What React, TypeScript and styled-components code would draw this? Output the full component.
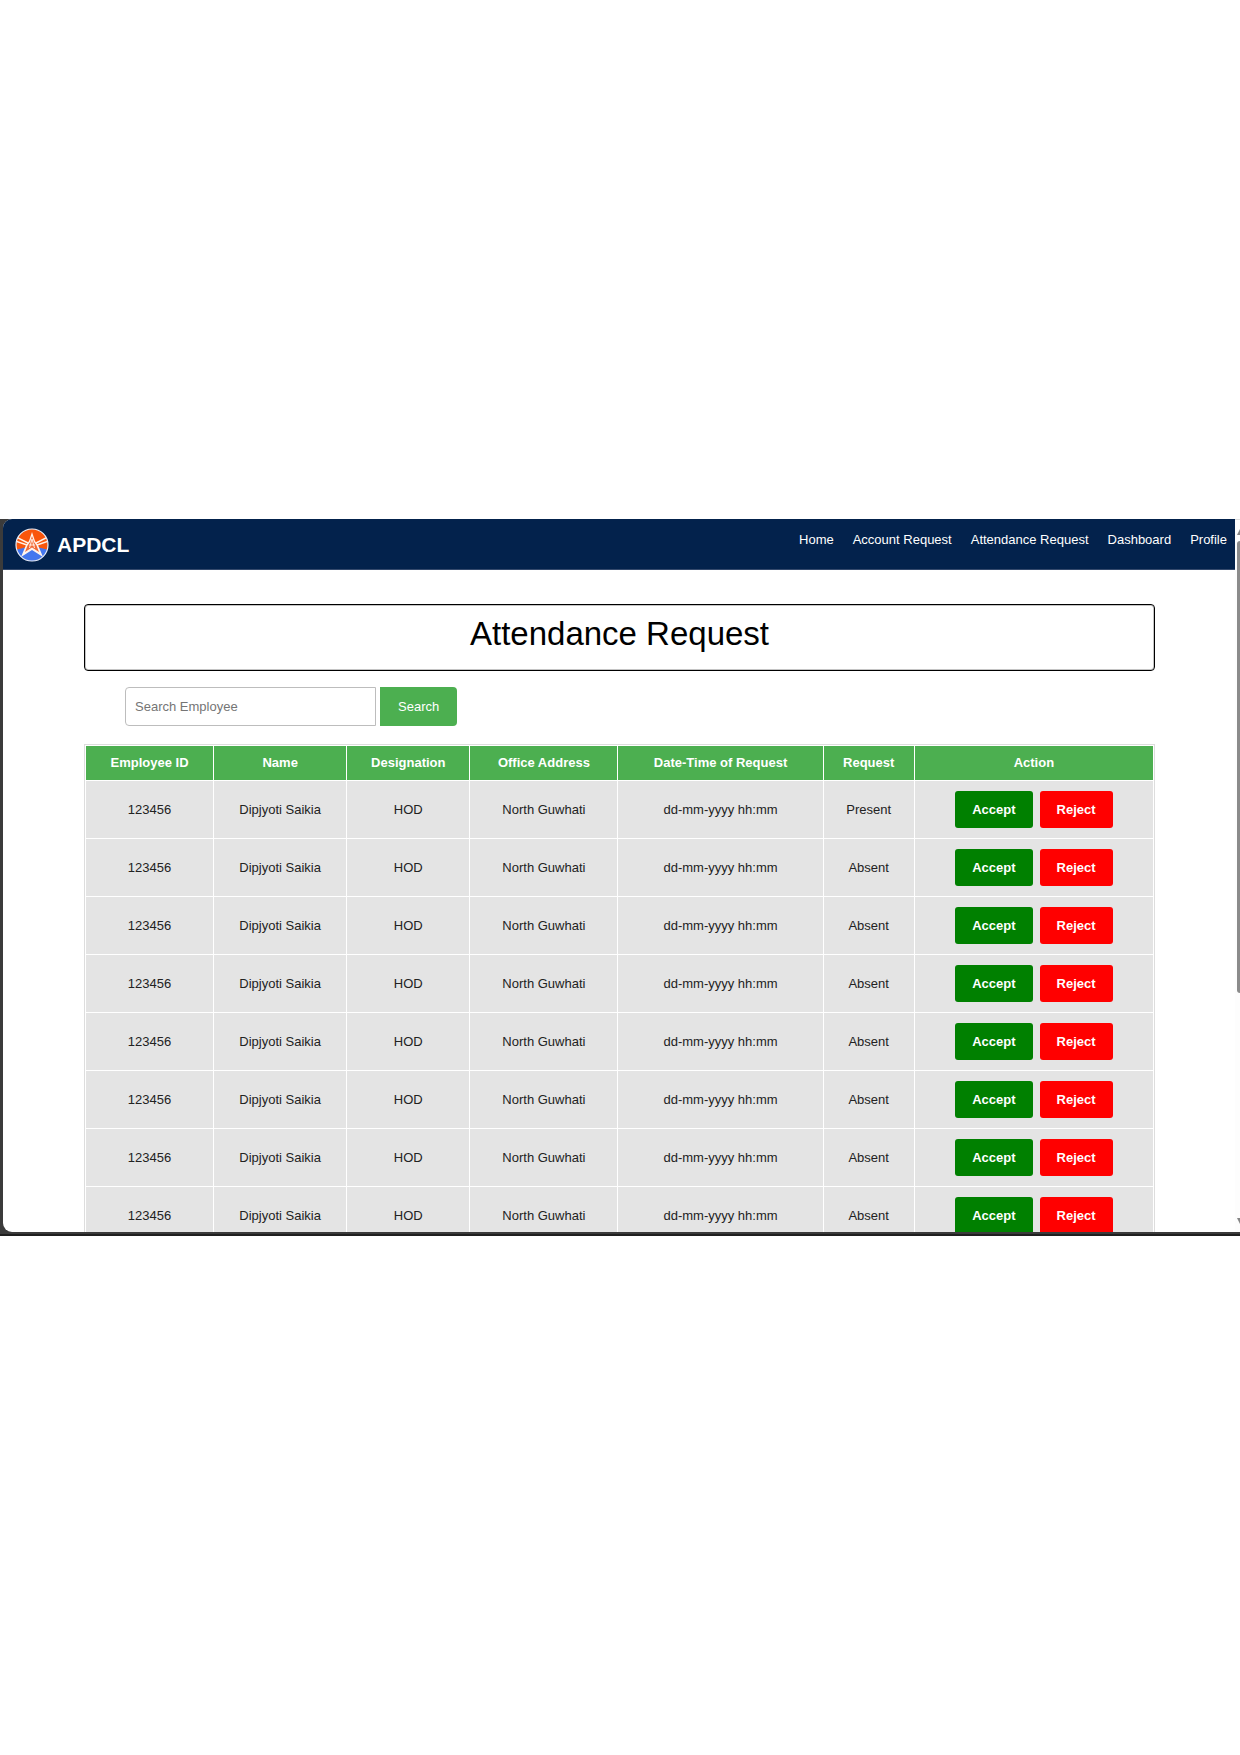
import React from "react";
import styled, { createGlobalStyle } from "styled-components";

const GlobalStyle = createGlobalStyle`
  *, *::before, *::after { box-sizing: border-box; }
  body {
    margin: 0;
    background: #ffffff;
    color: #222222;
    font: 13px/16px "Liberation Sans", Arial, sans-serif;
  }
`;

const Page = styled.div`
  min-height: 100vh;
  display: flex;
  flex-direction: column;
  justify-content: center;
`;

const Frame = styled.div`
  aspect-ratio: 1240 / 717;
  display: flex;
  padding: 0 0 2px 3px;
  background: #3b3b3b;
  border-bottom: 2px solid #1f1f1f;
  overflow: hidden;
`;

const Viewport = styled.div`
  flex: 1;
  min-width: 0;
  display: flex;
  background: #ffffff;
  border-radius: 9px 0 0 9px;
  overflow: hidden;
`;

const Content = styled.div`
  flex: 1;
  min-width: 0;
`;

const Header = styled.header`
  display: flex;
  justify-content: space-between;
  align-items: flex-start;
  padding: 9px 8px 7px 12px;
  background: #03224c;
  border-bottom: 1px solid #34496c;
`;

const Brand = styled.a`
  display: flex;
  align-items: center;
  gap: 8px;
  color: #ffffff;
  font-size: 21px;
  line-height: 24px;
  font-weight: bold;
  text-decoration: none;
`;

const NavLinks = styled.nav`
  display: flex;
  gap: 19px;
  padding-top: 4px;
`;

const NavLink = styled.a`
  color: #ffffff;
  text-decoration: none;
`;

const Main = styled.main`
  padding: 34px 80px 0 81px;
`;

const Title = styled.h1`
  margin: 0;
  padding: 9px 0 16px;
  border: 1px solid #000000;
  border-radius: 4px;
  box-shadow: inset 0 0 0 1px #c4c4c4;
  color: #000000;
  font-size: 33px;
  line-height: 40px;
  font-weight: normal;
  text-align: center;
`;

const SearchForm = styled.form`
  display: flex;
  gap: 4px;
  margin: 16px 41px 18px;
`;

const SearchInput = styled.input`
  width: 251px;
  height: 39px;
  padding: 0 9px;
  border: 1px solid #bdbdbd;
  border-radius: 4px 0 0 4px;
  background: #ffffff;
  color: #222222;
  font: inherit;

  &::placeholder {
    color: #757575;
    opacity: 1;
  }
`;

const SearchButton = styled.button`
  height: 39px;
  padding: 0 18px;
  border: 0;
  border-radius: 0 4px 4px 0;
  background: #4caf50;
  color: #ffffff;
  font: inherit;
  cursor: pointer;
`;

const Table = styled.table`
  width: 100%;
  table-layout: fixed;
  border: 1px solid #dddddd;
  border-collapse: separate;
  border-spacing: 1px;
  text-align: center;
`;

const HeadCell = styled.th<{ $width: number }>`
  width: ${(p) => p.$width}px;
  height: 34px;
  padding: 0;
  background: #4caf50;
  color: #ffffff;
  font-weight: bold;
`;

const Cell = styled.td`
  height: 57px;
  padding: 0;
  background: #e4e4e4;
`;

const Actions = styled.div`
  display: flex;
  justify-content: center;
  gap: 7px;
`;

const ActionButton = styled.button<{ $color: string }>`
  height: 37px;
  padding: 0 17px;
  border: 0;
  border-radius: 3px;
  background: ${(p) => p.$color};
  color: #ffffff;
  font: inherit;
  font-weight: bold;
  cursor: pointer;
`;

const Scrollbar = styled.div`
  width: 5px;
  display: flex;
  flex-direction: column;
  align-items: flex-end;
  padding: 9px 0 8px;
  border-top: 1px solid #dcdcdc;
  background: #fdfdfd;
`;

const Thumb = styled.div`
  width: 3px;
  height: 65%;
  margin: 6px 0 auto;
  border-radius: 3px 0 0 3px;
  background: #8b8b8b;
`;

const columns = [
  { label: "Employee ID", width: 127 },
  { label: "Name", width: 132 },
  { label: "Designation", width: 122 },
  { label: "Office Address", width: 147 },
  { label: "Date-Time of Request", width: 204 },
  { label: "Request", width: 90 },
  { label: "Action", width: 238 },
];

const requests = ["Present", "Absent", "Absent", "Absent", "Absent", "Absent", "Absent", "Absent"];

const links = ["Home", "Account Request", "Attendance Request", "Dashboard", "Profile"];

function Logo() {
  return (
    <svg width="34" height="34" viewBox="0 0 34 34" aria-hidden="true">
      <defs>
        <clipPath id="disc">
          <circle cx="17" cy="17" r="16" />
        </clipPath>
      </defs>
      <g clipPath="url(#disc)">
        <rect width="34" height="19" fill="#f9560c" />
        <rect y="18" width="34" height="16" fill="#4577ee" />
        <path d="M0 18 L12 16 L12 19 L0 22Z M34 18 L22 16 L22 19 L34 22Z" fill="#f9560c" />
        <path d="M1 9 L13 15 M0 13 L12 17 M33 9 L21 15 M34 13 L22 17" stroke="#fff1e6" strokeWidth="1.5" />
        <path
          d="M17 4 L20 13 L23 17 L28 29 L17 22 L6 29 L11 17 L14 13Z"
          fill="#fff3ec"
        />
        <path d="M17 8 L19 14 L21.5 17.5 L24 24 L17 19.5 L10 24 L12.5 17.5 L15 14Z" fill="#f26a35" />
        <path d="M17 11 L19.5 20 M17 11 L14.5 20 M14 17 H20" stroke="#ffe9dc" strokeWidth="1" fill="none" />
      </g>
      <circle cx="17" cy="17" r="16" fill="none" stroke="#e9edf8" strokeWidth="1.2" />
    </svg>
  );
}

function Arrow({ down = false }: { down?: boolean }) {
  return (
    <svg width="3" height="6" viewBox="0 0 3 6" aria-hidden="true">
      <path d={down ? "M0 0 H3 V6Z" : "M0 6 L3 0 V6Z"} fill="#858585" />
    </svg>
  );
}

export default function App() {
  return (
    <Page>
      <GlobalStyle />
      <Frame>
        <Viewport>
          <Content>
            <Header>
              <Brand href="#home">
                <Logo />
                APDCL
              </Brand>
              <NavLinks>
                {links.map((link) => (
                  <NavLink key={link} href={`#${link.toLowerCase().replace(" ", "-")}`}>
                    {link}
                  </NavLink>
                ))}
              </NavLinks>
            </Header>
            <Main>
              <Title>Attendance Request</Title>
              <SearchForm onSubmit={(e) => e.preventDefault()}>
                <SearchInput type="text" aria-label="Search Employee" placeholder="Search Employee" />
                <SearchButton type="submit">Search</SearchButton>
              </SearchForm>
              <Table>
                <thead>
                  <tr>
                    {columns.map((column) => (
                      <HeadCell key={column.label} scope="col" $width={column.width}>
                        {column.label}
                      </HeadCell>
                    ))}
                  </tr>
                </thead>
                <tbody>
                  {requests.map((request, index) => (
                    <tr key={index}>
                      <Cell>123456</Cell>
                      <Cell>Dipjyoti Saikia</Cell>
                      <Cell>HOD</Cell>
                      <Cell>North Guwhati</Cell>
                      <Cell>dd-mm-yyyy hh:mm</Cell>
                      <Cell>{request}</Cell>
                      <Cell>
                        <Actions>
                          <ActionButton type="button" $color="#008000">Accept</ActionButton>
                          <ActionButton type="button" $color="#ff0000">Reject</ActionButton>
                        </Actions>
                      </Cell>
                    </tr>
                  ))}
                </tbody>
              </Table>
            </Main>
          </Content>
          <Scrollbar aria-hidden="true">
            <Arrow />
            <Thumb />
            <Arrow down />
          </Scrollbar>
        </Viewport>
      </Frame>
    </Page>
  );
}
